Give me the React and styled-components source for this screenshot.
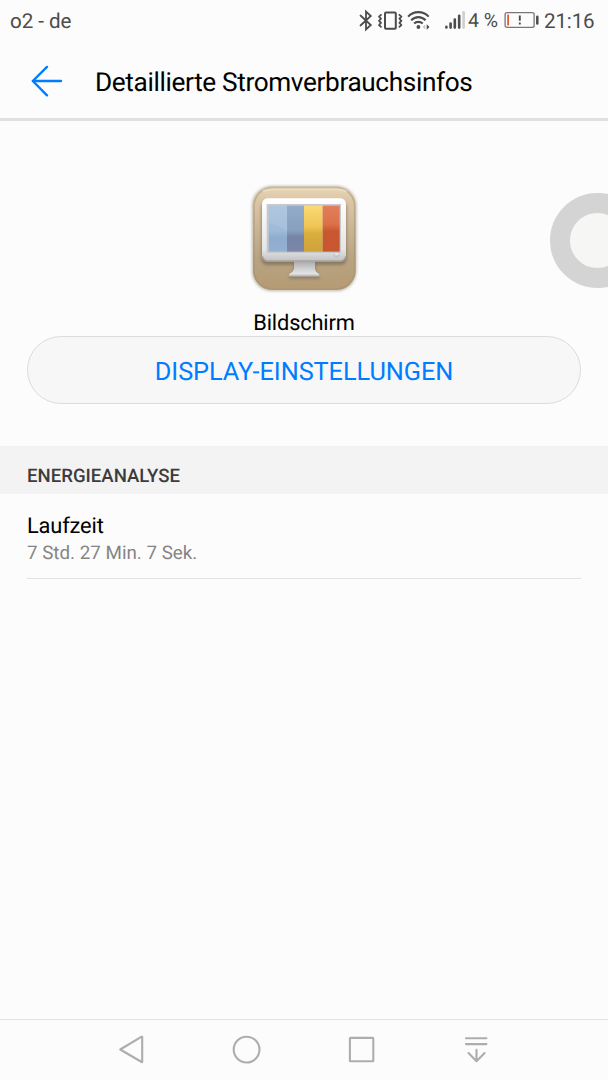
import React from 'react';
import styled, { createGlobalStyle } from 'styled-components'

const GlobalStyle = createGlobalStyle`
  * {
    box-sizing: border-box;
  }
  body {
    margin: 0;
    background-color: #fcfcfc;
    font-family: Roboto, "Liberation Sans", sans-serif;
    text-rendering: geometricPrecision;
    overflow: hidden;
  }
`

const Screen = styled.div`
  position: relative;
  display: flex;
  flex-direction: column;
  height: 1080px;
  overflow: hidden;
  background-color: #fcfcfc;
`

const StatusBar = styled.div`
  display: flex;
  align-items: center;
  height: 42px;
  padding: 0 0 0 10px;
  color: #4c4c4c;
`

const StatusText = styled.span`
  width: ${ props => props.$width ? `${props.$width}px` : 'auto' };
  padding-top: ${ props => props.$drop || 0 }px;
  font-size: ${ props => props.$size || 20.6 }px;
  line-height: 24px;
  letter-spacing: ${ props => props.$spacing || 0 }px;
  white-space: nowrap;
`

const StatusIcons = styled.div`
  display: flex;
  align-items: center;
  height: 42px;
  margin-left: auto;
`

const Icon = styled.svg`
  display: block;
  flex: none;
  fill: none;
  stroke-linecap: ${ props => props.$cap || 'round' };
  stroke-linejoin: round;
`

const Header = styled.header`
  display: flex;
  align-items: center;
  height: 79px;
  padding-left: 28px;
  border-bottom: 3px solid #e0e0e0;
`

const Title = styled.h1`
  margin: 5px 0 0 29px;
  font-size: 26.2px;
  font-weight: 400;
  line-height: 32px;
  letter-spacing: -0.36px;
  color: #000;
  white-space: nowrap;
`

const Summary = styled.section`
  display: flex;
  flex-direction: column;
  align-items: center;
  height: 325px;
  padding: 54px 27px 0;
`

const AppName = styled.div`
  margin-top: 4px;
  padding-top: 1px;
  height: 27px;
  font-size: 21.8px;
  line-height: 27px;
  letter-spacing: -0.15px;
  color: #000;
`

const SettingsButton = styled.button`
  width: 100%;
  height: 68px;
  padding: 4px 0 0;
  border: 1px solid #dcdcdc;
  border-radius: 34px;
  background-color: #f7f7f7;
  font-family: inherit;
  font-size: 25.3px;
  letter-spacing: -0.06px;
  color: #007dff;
  text-rendering: inherit;
`

const SectionTitle = styled.h2`
  height: 48px;
  margin: 0;
  padding: 18px 27px 0;
  background-color: #f3f3f3;
  font-size: 18.6px;
  font-weight: 500;
  line-height: 24px;
  color: #3c3c3c;
`

const Row = styled.div`
  height: 85px;
  margin: 0 27px;
  padding-top: 19px;
  border-bottom: 1px solid #e2e2e2;
`

const RowTitle = styled.div`
  font-size: 21.8px;
  line-height: 27px;
  letter-spacing: -0.15px;
  color: #000;
`

const RowValue = styled.div`
  font-size: 18.8px;
  line-height: 26px;
  color: #858585;
`

const NavBar = styled.nav`
  display: flex;
  align-items: center;
  justify-content: center;
  gap: 75px;
  height: 61px;
  margin-top: auto;
  border-top: 1px solid #e2e2e2;
`

const FloatingDock = styled.div`
  position: absolute;
  top: 193px;
  left: 550px;
  width: 95px;
  height: 95px;
  border: 20px solid #d4d4d4;
  border-radius: 50%;
  background-color: #f6f6f5;
`

const BluetoothIcon = () => (
  <Icon width="17" height="42" viewBox="0 0 17 42" stroke="#4c4c4c" strokeWidth="1.8">
    <path d="M2.5 15.5 L12.8 25 L8 29.5 V11.5 L12.8 16 L2.5 25.5" strokeLinejoin="miter" />
  </Icon>
)

const VibrateIcon = () => (
  <Icon width="28" height="42" viewBox="0 0 28 42" stroke="#4c4c4c">
    <rect x="10" y="12.6" width="10.8" height="16.2" rx="1" strokeWidth="2" />
    <path d="M6 14.8 L4 16.6 L6 18.7 L4 20.8 L6 22.9 L4 25 L6 26.8" strokeWidth="1.8" />
    <path d="M24.4 14.8 L26.4 16.6 L24.4 18.7 L26.4 20.8 L24.4 22.9 L26.4 25 L24.4 26.8" strokeWidth="1.8" />
  </Icon>
)

const WifiIcon = () => (
  <Icon width="31" height="42" viewBox="0 0 31 42" stroke="#4c4c4c" strokeWidth="2.1" $cap="butt">
    <path d="M5.1 16.6 C10.7 10.6 20.1 10.6 25.7 16.6" />
    <path d="M8.2 20.3 C12.2 16 18.6 16 22.6 20.3" />
    <path d="M11.1 23.6 C13.5 21.3 17.3 21.3 19.7 23.6" />
    <circle cx="15.4" cy="27" r="1.9" fill="#4c4c4c" stroke="none" />
    <path d="M22.2 24.6 L19.7 27.1 L22.2 29.6z" fill="#c4c4c4" stroke="none" />
    <path d="M23.7 24.2 L26.5 27 L23.7 29.8z" fill="#4c4c4c" stroke="none" />
  </Icon>
)

const SignalIcon = () => (
  <Icon width="34" height="42" viewBox="0 0 34 42" stroke="#4c4c4c" strokeWidth="2.6">
    <path d="M12.4 26.9 V27.5 M16.6 23.6 V27.6 M20.8 19.6 V27.6 M25.2 15.8 V27.6" />
    <path d="M29.6 12.2 V27.6" stroke="#cfcfcf" />
  </Icon>
)

const BatteryIcon = () => (
  <Icon width="40" height="42" viewBox="0 0 40 42" $cap="butt">
    <rect x="1.1" y="12.6" width="29" height="14.8" rx="2" stroke="#777" strokeWidth="1.3" />
    <path d="M4.1 14.5 V25.5" stroke="#e0552b" strokeWidth="1.7" />
    <path d="M15.8 15.5 V20.8 M15.8 22.4 V24.4" stroke="#4c4c4c" strokeWidth="1.9" />
    <path d="M33.3 16.8 V23.6" stroke="#4c4c4c" strokeWidth="2.5" strokeLinecap="round" />
  </Icon>
)

const BackArrow = () => (
  <Icon width="38" height="38" viewBox="0 0 38 38" stroke="#007dff" strokeWidth="2.4">
    <path d="M33 20 H4.8 M19 5.9 L4.8 20 L19 34.3" />
  </Icon>
)

const DisplayIcon = () => (
  <Icon width="130" height="130" viewBox="-3 0 390 390">
    <defs>
      <linearGradient id="tile" x1="0" y1="0" x2="0" y2="1">
        <stop offset="0" stopColor="#ead7b8" />
        <stop offset="0.12" stopColor="#dcc8a8" />
        <stop offset="0.7" stopColor="#b8a382" />
        <stop offset="1" stopColor="#b59b74" />
      </linearGradient>
      <linearGradient id="frame" x1="0" y1="0" x2="0" y2="1">
        <stop offset="0" stopColor="#ffffff" />
        <stop offset="0.8" stopColor="#e6e6e8" />
        <stop offset="1" stopColor="#c2c1c2" />
      </linearGradient>
      <linearGradient id="stand" x1="0" y1="0" x2="0" y2="1">
        <stop offset="0" stopColor="#a5a4a5" />
        <stop offset="0.5" stopColor="#cfcfd1" />
        <stop offset="0.8" stopColor="#e3e3e4" />
        <stop offset="1" stopColor="#a9a6a3" />
      </linearGradient>
      <linearGradient id="lightBlue" x1="0" y1="0" x2="0" y2="1">
        <stop offset="0" stopColor="#a9c3de" />
        <stop offset="0.55" stopColor="#9fbad8" />
        <stop offset="0.7" stopColor="#8faccf" />
        <stop offset="1" stopColor="#94b1d2" />
      </linearGradient>
      <linearGradient id="darkBlue" x1="0" y1="0" x2="0" y2="1">
        <stop offset="0" stopColor="#91abc9" />
        <stop offset="0.55" stopColor="#86a0be" />
        <stop offset="0.68" stopColor="#7583a6" />
        <stop offset="1" stopColor="#7c88aa" />
      </linearGradient>
      <linearGradient id="yellow" x1="0" y1="0" x2="0" y2="1">
        <stop offset="0" stopColor="#fbd973" />
        <stop offset="0.45" stopColor="#eec556" />
        <stop offset="0.6" stopColor="#d9ae3e" />
        <stop offset="1" stopColor="#cda33a" />
      </linearGradient>
      <linearGradient id="orange" x1="0" y1="0" x2="0" y2="1">
        <stop offset="0" stopColor="#e27e5a" />
        <stop offset="0.4" stopColor="#dc714b" />
        <stop offset="0.55" stopColor="#c9582f" />
        <stop offset="1" stopColor="#c65731" />
      </linearGradient>
      <filter id="soften" x="-10%" y="-10%" width="120%" height="120%">
        <feGaussianBlur stdDeviation="4" />
      </filter>
    </defs>
    <rect x="36" y="33" width="313" height="315" rx="60" fill="#8d8473" opacity="0.6" filter="url(#soften)" />
    <rect x="39" y="35" width="308" height="310" rx="58" fill="url(#tile)" />
    <rect x="42" y="38" width="302" height="304" rx="55" stroke="#a58e6b" strokeWidth="5" opacity="0.45" />
    <path d="M70 48 Q82 43 98 43 H290 Q306 43 318 49" stroke="#ecdcc0" strokeWidth="5" />
    <rect x="64" y="78" width="256" height="192" rx="18" fill="#6f6048" opacity="0.6" filter="url(#soften)" />
    <path d="M162 260 H226 L227 286 L241 312 H145 L160 286z" fill="#6f6048" opacity="0.5" filter="url(#soften)" />
    <path d="M162 256 H225 V282 Q226 290 238 298 V306 H147 V298 Q160 290 162 282z" fill="url(#stand)" />
    <path d="M148 306 H237" stroke="#92877a" strokeWidth="3" />
    <rect x="66" y="70" width="252" height="189" rx="16" fill="url(#frame)" />
    <path d="M69 246 Q72 258 84 258 H302 Q313 257 316 246" stroke="#a6a4a3" strokeWidth="4" />
    <rect x="80" y="87" width="223" height="147" fill="#c9c9cb" />
    <rect x="86" y="92" width="56" height="138" fill="url(#lightBlue)" />
    <rect x="141" y="92" width="51" height="138" fill="url(#darkBlue)" />
    <rect x="192" y="92" width="56" height="138" fill="url(#yellow)" />
    <rect x="248" y="92" width="51" height="138" fill="url(#orange)" />
    <path d="M86 92 H142 V168 Q113 148 86 143z" fill="#fff" opacity="0.08" />
    <ellipse cx="290" cy="241" rx="9" ry="7" fill="#c3c3c3" />
    <ellipse cx="290" cy="238" rx="6" ry="3" fill="#eee" />
  </Icon>
)

const NavBack = () => (
  <Icon width="40" height="40" viewBox="0 0 40 40" stroke="#adadad" strokeWidth="2.1">
    <path d="M8.2 19.5 L29.7 6.7 Q30.2 6.5 30.2 7.1 V31.7 Q30.2 32.3 29.7 32z" />
  </Icon>
)

const NavHome = () => (
  <Icon width="40" height="40" viewBox="0 0 40 40" stroke="#adadad" strokeWidth="2.1">
    <circle cx="19.6" cy="19.6" r="12.9" />
  </Icon>
)

const NavRecent = () => (
  <Icon width="40" height="40" viewBox="0 0 40 40" stroke="#adadad" strokeWidth="2.1">
    <rect x="7.9" y="7.9" width="23.4" height="23.4" rx="0.6" />
  </Icon>
)

const NavPullDown = () => (
  <Icon width="40" height="40" viewBox="0 0 40 40" stroke="#adadad" strokeWidth="2.1">
    <path d="M9 8.2 H29.4 M9 14.1 H29.4 M19.5 19.8 V31.2 M11.5 23 L19.5 31.2 L27.6 23" />
  </Icon>
)

const App = () => (
  <Screen>
    <GlobalStyle />
    <StatusBar>
      <StatusText $drop={2} $spacing={-0.05}>o2 - de</StatusText>
      <StatusIcons>
        <BluetoothIcon />
        <VibrateIcon />
        <WifiIcon />
        <SignalIcon />
        <StatusText $size={19.5} $width={36}>4 %</StatusText>
        <BatteryIcon />
        <StatusText $width={64} $drop={2} $spacing={-0.15}>21:16</StatusText>
      </StatusIcons>
    </StatusBar>
    <Header>
      <BackArrow />
      <Title>Detaillierte Stromverbrauchsinfos</Title>
    </Header>
    <Summary>
      <DisplayIcon />
      <AppName>Bildschirm</AppName>
      <SettingsButton>DISPLAY-EINSTELLUNGEN</SettingsButton>
    </Summary>
    <SectionTitle>ENERGIEANALYSE</SectionTitle>
    <Row>
      <RowTitle>Laufzeit</RowTitle>
      <RowValue>7 Std. 27 Min. 7 Sek.</RowValue>
    </Row>
    <FloatingDock />
    <NavBar>
      <NavBack />
      <NavHome />
      <NavRecent />
      <NavPullDown />
    </NavBar>
  </Screen>
)

export default App;
